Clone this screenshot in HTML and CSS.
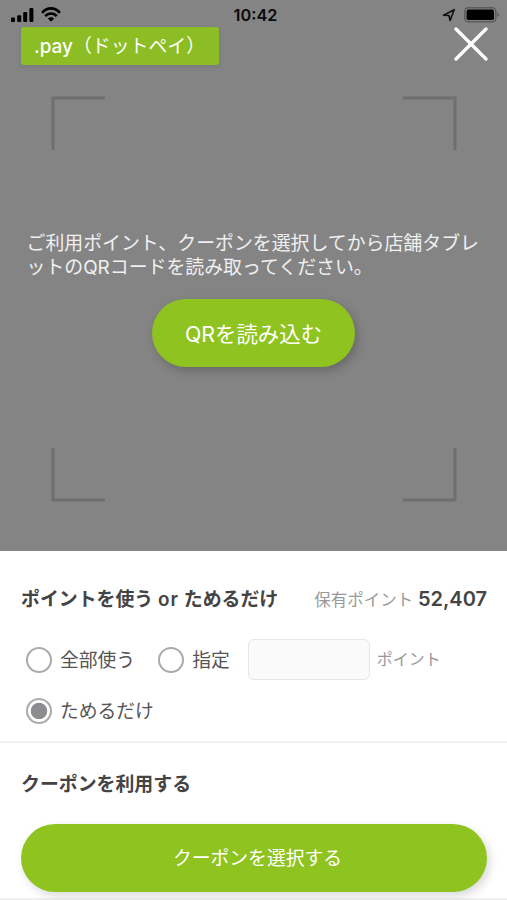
FILE: index.html
```html
<!DOCTYPE html>
<html lang="ja">
<head>
<meta charset="utf-8">
<title>.pay（ドットペイ）</title>
<link rel="stylesheet" href="styles.css">
</head>
<body>
<main class="screen">
  <section class="scanner">
    <div class="status">
      <div class="status-left">
        <svg width="24" height="16" viewBox="0 0 24 16"><rect x="0" y="10.5" width="4" height="4.5" rx="1"/><rect x="6.2" y="8.2" width="4" height="6.8" rx="1"/><rect x="12.2" y="5" width="4" height="10" rx="1"/><rect x="18.4" y="1" width="4" height="14" rx="1"/></svg>
        <svg width="20" height="16" viewBox="0 0 20 16"><g fill="none" stroke="#000" stroke-width="2.6"><path d="M1.1 5.9C6-.1 14-.1 18.9 5.9"/><path d="M4.3 9.2c3.2-3.7 8.2-3.7 11.4 0"/></g><path d="M10 14.8 6.9 11.6c1.8-1.7 4.4-1.7 6.2 0z"/></svg>
      </div>
      <time class="clock">10:42</time>
      <div class="status-right">
        <svg width="14" height="14" viewBox="0 0 14 14"><path d="M1.6 7.3 12.2 1.7 8.1 12.5 7 7.5z" fill="none" stroke="#111" stroke-width="1.6" stroke-linejoin="round"/></svg>
        <svg width="36" height="16" viewBox="0 0 36 16"><rect x=".8" y=".8" width="31" height="14" rx="3.6" fill="none" stroke="#5b5b5b" stroke-width="1.5"/><rect x="2.6" y="2.6" width="27.4" height="10.4" rx="1.8"/><path d="M33.3 5.5c2.4.8 2.4 3.6 0 4.4z" fill="#5b5b5b"/></svg>
      </div>
    </div>
    <header class="topbar">
      <h1 class="tag"><span class="brand">.pay</span>（ドットペイ）</h1>
      <button class="close" aria-label="閉じる"><svg width="34" height="34" viewBox="0 0 34 34"><path d="M2 2 32 32M32 2 2 32" stroke="#fff" stroke-width="3.3" stroke-linecap="round"/></svg></button>
    </header>
    <div class="stage">
      <svg class="frame" width="406" height="406" viewBox="0 0 406 406"><path d="M2 54V2H54M352 2H404V54M2 352V404H54M352 404H404V352" fill="none" stroke="#6f6f6f" stroke-width="3"/></svg>
      <div class="guide">
        <p class="message">ご利用ポイント、クーポンを選択してから店舗タブレ<br>ットのQRコードを読み取ってください。</p>
        <button class="pill pill-scan">QRを読み込む</button>
      </div>
    </div>
  </section>
  <section class="points">
    <div class="points-head">
      <h2 class="title">ポイントを使う <span class="latin">or</span> ためるだけ</h2>
      <p class="balance">保有ポイント <strong>52,407</strong></p>
    </div>
    <div class="options">
      <label class="option"><input type="radio" name="use" class="radio"><span>全部使う</span></label>
      <label class="option option-set"><input type="radio" name="use" class="radio"><span>指定</span></label>
      <input class="amount" type="text" aria-label="ポイント">
      <span class="unit">ポイント</span>
    </div>
    <div class="options options-save">
      <label class="option"><input type="radio" name="use" class="radio" checked><span>ためるだけ</span></label>
    </div>
  </section>
  <section class="coupon">
    <h2 class="title">クーポンを利用する</h2>
    <button class="pill pill-coupon">クーポンを選択する</button>
  </section>
</main>
</body>
</html>
```
FILE: styles.css
```css
* { box-sizing: border-box; }
body {
  margin: 0;
  background: #fff;
  color: #444;
  font-family: "Inter", "Noto Sans CJK JP", sans-serif;
  font-size: 18.8px;
}
h1, h2, p { margin: 0; }
button, input { font-family: inherit; }
button { border: 0; padding: 0; background: none; }
svg { display: block; }

.screen {
  width: 507px;
  height: 900px;
  overflow: hidden;
}
.scanner {
  height: 551px;
  background: #848484;
}
.status {
  display: grid;
  grid-template-columns: 1fr auto 1fr;
  align-items: center;
  height: 27px;
  padding: 2px 7px 0 11px;
}
.status-left, .status-right {
  display: flex;
  align-items: center;
  gap: 6px;
}
.status-right {
  justify-content: flex-end;
  gap: 8px;
}
.clock {
  color: #0a0a0a;
  font-size: 16.3px;
  font-weight: 600;
  line-height: 20px;
}
.topbar {
  display: flex;
  justify-content: space-between;
  height: 69px;
  padding: 0 19px 0 21px;
}
.tag {
  width: 198px;
  height: 38px;
  padding-left: 13px;
  border-radius: 3px;
  background: #8cbd25;
  box-shadow: 0 2px 4px rgba(0, 0, 0, .08);
  color: #fff;
  font-size: 18.9px;
  font-weight: 400;
  line-height: 40px;
  white-space: nowrap;
}
.brand { font-weight: 500; }
.close { height: 34px; }
.stage {
  display: grid;
  justify-items: center;
}
.frame, .guide { grid-area: 1 / 1; }
.guide {
  display: flex;
  flex-direction: column;
  align-items: center;
  padding-top: 136px;
}
.message {
  width: 454px;
  color: #f0f0f0;
  font-size: 18.9px;
  line-height: 24px;
  white-space: nowrap;
}
.pill {
  height: 68px;
  border-radius: 34px;
  background: #8fc31f;
  color: #fff;
}
.pill-scan {
  width: 203px;
  margin-top: 19px;
  padding-bottom: 2px;
  box-shadow: 3px 4px 10px rgba(0, 0, 0, .2);
  font-size: 21.4px;
}
.points {
  height: 190px;
  padding: 35px 20px 0 21px;
}
.points-head {
  display: flex;
  align-items: center;
  justify-content: space-between;
  height: 28px;
  white-space: nowrap;
}
.title {
  font-size: 18.9px;
  font-weight: 600;
  line-height: 28px;
}
.latin { letter-spacing: 1px; }
.balance {
  padding-bottom: 2px;
  color: #999;
  font-size: 16.5px;
  line-height: 26px;
}
.balance strong {
  color: #444;
  font-size: 20px;
  font-weight: 600;
}
.options {
  display: flex;
  align-items: center;
  height: 41px;
  margin-top: 25px;
  padding-left: 5px;
}
.options-save {
  height: 28px;
  margin-top: 17px;
}
.option {
  display: flex;
  align-items: center;
  gap: 8px;
  color: #555;
  line-height: 26px;
}
.option span { padding-top: 2px; }
.option-set { margin-left: 23px; }
.radio {
  appearance: none;
  width: 26px;
  height: 26px;
  margin: 0;
  border: 2px solid #aaa;
  border-radius: 50%;
  background: #fff;
}
.radio:checked {
  background: radial-gradient(circle, #8d8d90 7.8px, #fff 8.6px);
}
.amount {
  width: 122px;
  height: 41px;
  margin-left: 18px;
  border: 1.5px solid #e6e6e6;
  border-radius: 6px;
  background: #fafafa;
}
.unit {
  margin-left: 7px;
  padding-bottom: 3px;
  color: #999;
  font-size: 16px;
}
.coupon {
  height: 159px;
  padding: 28px 20px 0 21px;
  border-top: 2px solid #f2f2f2;
  border-bottom: 2px solid #f0f0f0;
}
.pill-coupon {
  width: 100%;
  margin-top: 25px;
  padding: 0 0 3px 7px;
  box-shadow: 3px 4px 10px rgba(0, 0, 0, .15);
  font-size: 18.8px;
}
```
